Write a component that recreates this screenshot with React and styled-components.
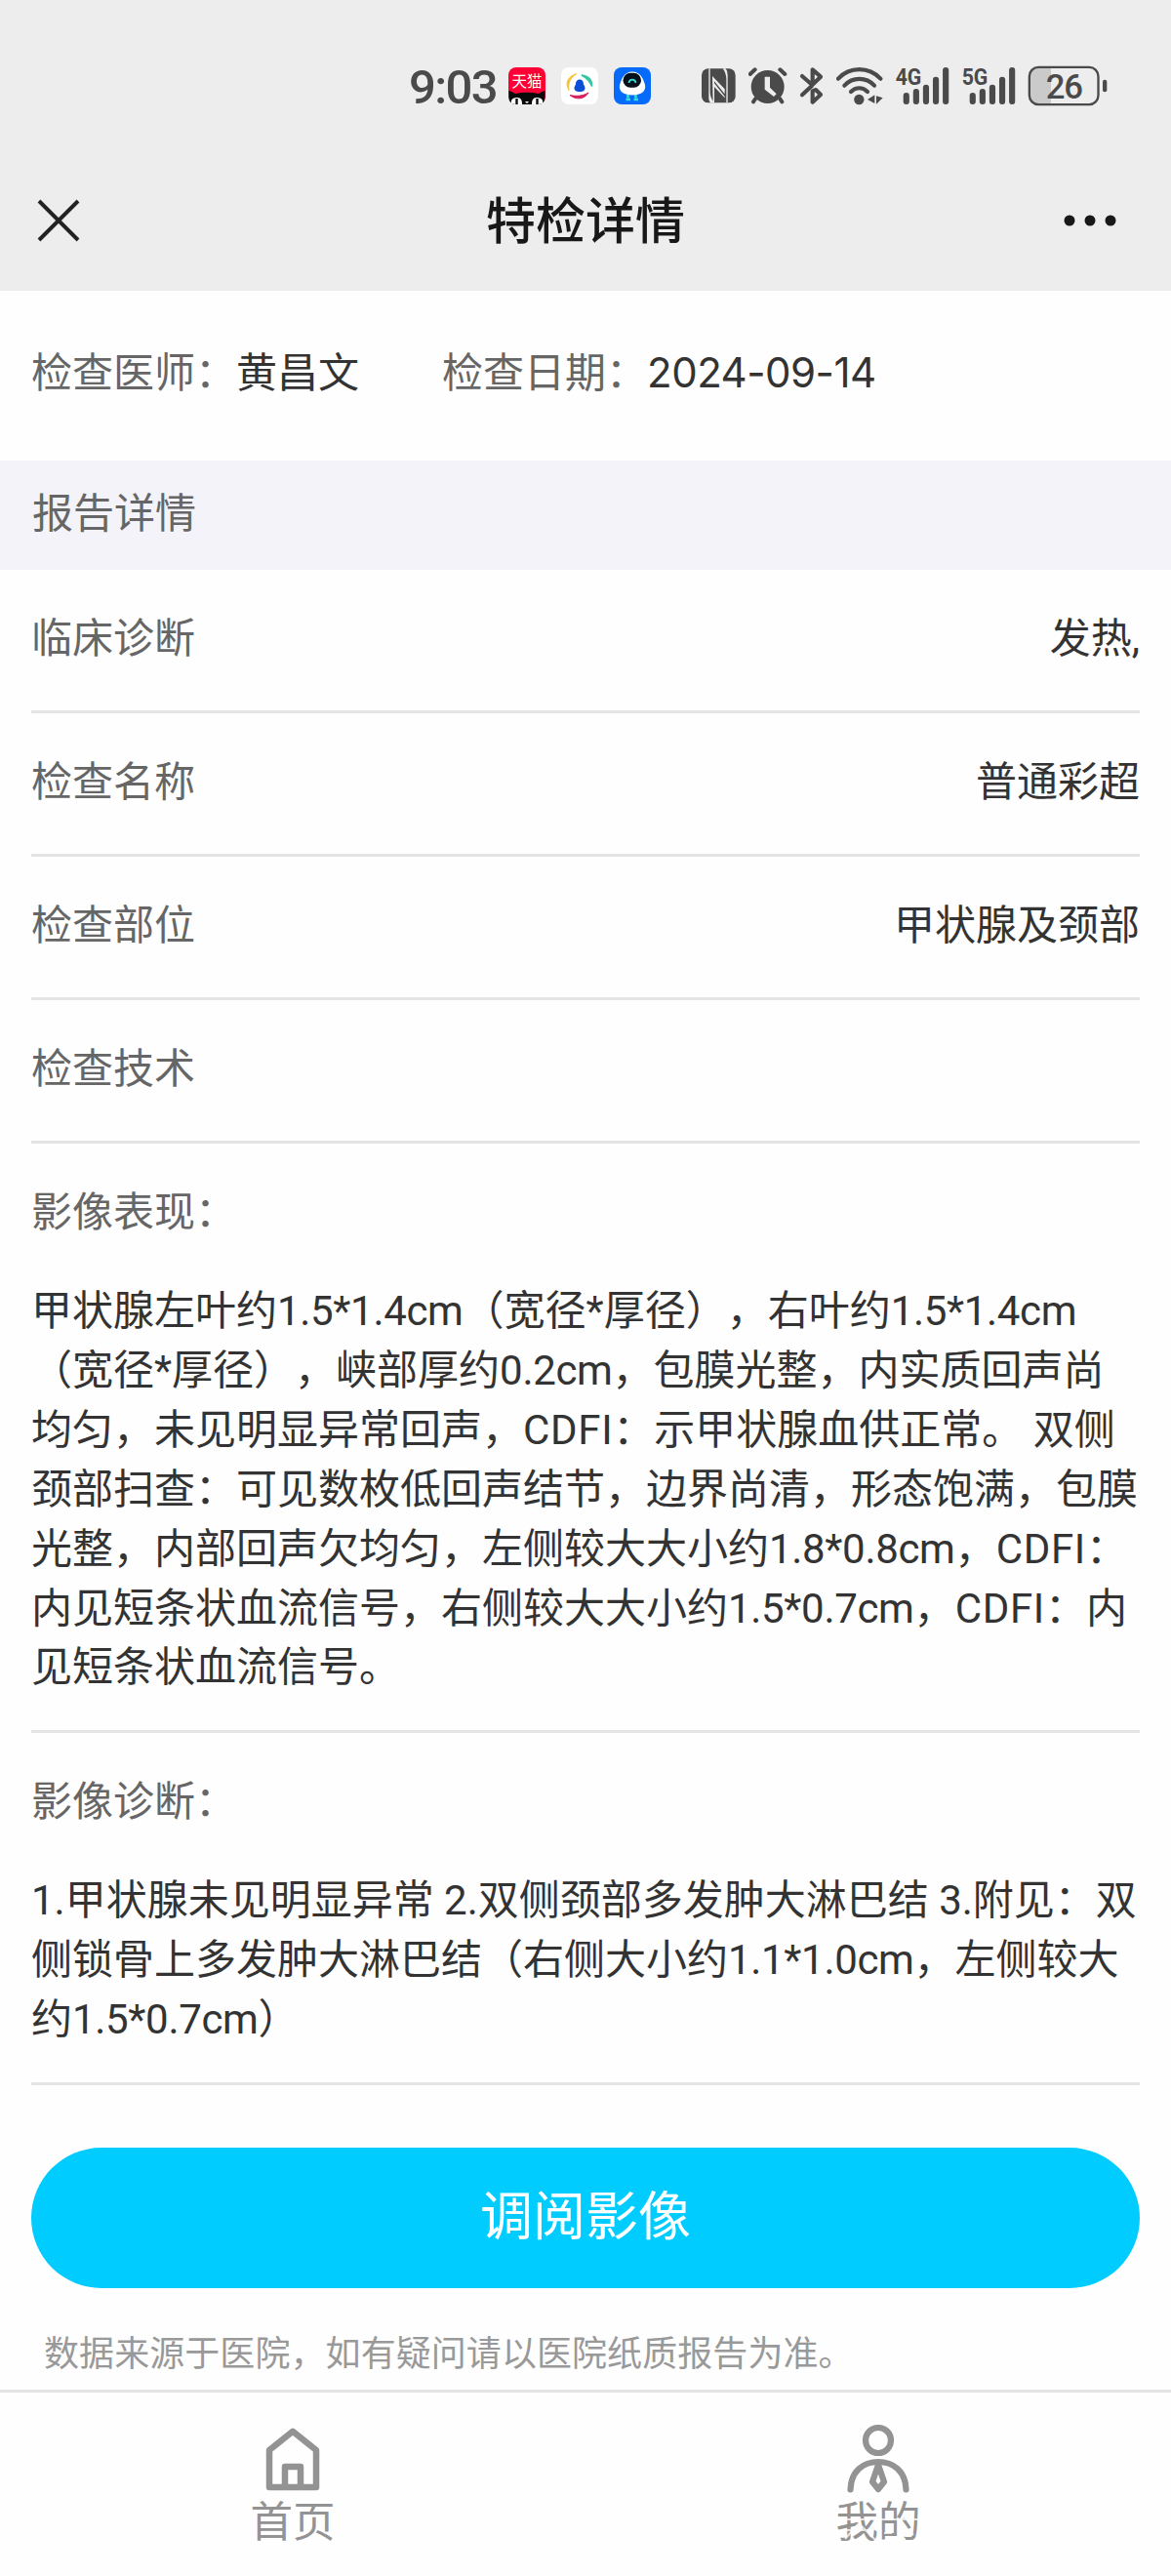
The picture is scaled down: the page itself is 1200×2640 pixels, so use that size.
import React from 'react';
import styled, { createGlobalStyle } from 'styled-components';

const GlobalStyle = createGlobalStyle`
  body {
    margin: 0;
    background: #fefefe;
    font-family: Roboto, 'Noto Sans CJK SC', sans-serif;
    font-size: 42px;
    color: #333;
    text-spacing-trim: space-all;
  }

  svg {
    display: block;
    flex: none;
  }
`;

const Page = styled.div`
  width: 1200px;
  height: 2640px;
  display: flex;
  flex-direction: column;
  overflow: hidden;
`;

const Header = styled.header`
  height: 298px;
  background: #ededed;
  flex: none;
`;

const StatusBar = styled.div`
  box-sizing: border-box;
  height: 154px;
  padding: 22px 0 0 419px;
  display: flex;
  align-items: center;
  color: #4a4a4a;
`;

const Time = styled.span`
  width: 102px;
  font-size: 49px;
  font-weight: 500;
  letter-spacing: -1.6px;
  line-height: 60px;
  padding-top: 3px;
`;

const AppIcons = styled.div`
  display: flex;
  gap: 16px;
  margin-right: 52px;
`;

const SystemIcons = styled.div`
  display: flex;
  align-items: center;
  gap: 12px;
`;

const NavBar = styled.nav`
  box-sizing: border-box;
  height: 144px;
  padding: 0 56px 0 38px;
  display: flex;
  align-items: center;
  justify-content: space-between;
`;

const Title = styled.h1`
  margin: 0;
  padding: 3px 0 0 28px;
  font-size: 51px;
  font-weight: 500;
  line-height: 60px;
  color: #181818;
`;

const InfoRow = styled.div`
  height: 174px;
  box-sizing: border-box;
  padding: 0 32px 13px;
  display: flex;
  align-items: center;
  gap: 85px;
  flex: none;
`;

const Label = styled.span`
  color: #666;
`;

const DateText = styled.span`
  font-family: Inter, sans-serif;
  letter-spacing: -0.5px;
`;

const SectionBar = styled.div`
  box-sizing: border-box;
  height: 112px;
  padding: 0 33px 11px;
  display: flex;
  align-items: center;
  background: #f4f3f9;
  color: #666;
  flex: none;
`;

const Details = styled.main`
  padding: 0 32px;
  flex: none;
`;

const DetailRow = styled.div`
  box-sizing: border-box;
  height: 147px;
  padding-bottom: 11px;
  display: flex;
  align-items: center;
  justify-content: space-between;
  border-bottom: 3px solid #e4e4e4;
`;

const TextBlock = styled.section`
  box-sizing: border-box;
  height: ${(props) => props.$height}px;
  padding-top: 40px;
  border-bottom: 3px solid #e4e4e4;
`;

const BlockTitle = styled.div`
  line-height: 61px;
  color: #666;
`;

const BlockText = styled.p`
  margin: 41px 0 0;
  line-height: 60.9px;
`;

const Latin = styled.span`
  letter-spacing: ${(props) => props.$spacing}px;
`;

const ViewButton = styled.button`
  display: block;
  width: 100%;
  height: 144px;
  margin-top: 64px;
  padding: 0 0 12px;
  border: none;
  border-radius: 72px;
  background: #0cf;
  color: #fff;
  font: inherit;
  font-size: 54px;
`;

const Notice = styled.p`
  margin: 40px 0 0;
  padding-left: 13px;
  font-size: 36px;
  letter-spacing: 0.07px;
  line-height: 56px;
  color: #999;
`;

const TabBar = styled.footer`
  margin-top: auto;
  box-sizing: border-box;
  height: 191px;
  display: flex;
  border-top: 3px solid #e4e4e4;
  flex: none;
`;

const Tab = styled.div`
  position: relative;
  flex: 1;
  display: flex;
  flex-direction: column;
  align-items: center;
  padding-top: 33px;
  font-size: 43.5px;
  line-height: 54px;
  color: #939393;
`;

const Overlay = styled.svg`
  position: absolute;
  left: 256px;
  top: 124px;
`;

const rows = [
  { label: '临床诊断', value: '发热,' },
  { label: '检查名称', value: '普通彩超' },
  { label: '检查部位', value: '甲状腺及颈部' },
  { label: '检查技术', value: '' },
];

const findings =
  '甲状腺左叶约1.5*1.4cm（宽径*厚径），右叶约1.5*1.4cm（宽径*厚径），峡部厚约0.2cm，包膜光整，内实质回声尚均匀，未见明显异常回声，CDFI：示甲状腺血供正常。 双侧颈部扫查：可见数枚低回声结节，边界尚清，形态饱满，包膜光整，内部回声欠均匀，左侧较大大小约1.8*0.8cm，CDFI：内见短条状血流信号，右侧较大大小约1.5*0.7cm，CDFI：内见短条状血流信号。';

const diagnosis =
  '1.甲状腺未见明显异常 2.双侧颈部多发肿大淋巴结 3.附见：双侧锁骨上多发肿大淋巴结（右侧大小约1.1*1.0cm，左侧较大约1.5*0.7cm）';

// Measurements are set a little tighter, abbreviations a little wider
const MixedText = ({ text }) =>
  text.split(/([\d.*]+cm|[A-Z]+)/).map((part, i) =>
    i % 2 === 0 ? (
      part
    ) : (
      <Latin key={i} $spacing={part.endsWith('cm') ? -0.32 : 0.7}>
        {part}
      </Latin>
    )
  );

const TmallIcon = () => (
  <svg width="38" height="38" viewBox="0 0 38 38">
    <rect width="38" height="38" rx="8" fill="#ff0036" />
    <text x="19" y="20" textAnchor="middle" fontSize="15.5" fill="#fff">
      天猫
    </text>
    <path
      d="M0.5 24 C3 24.5 5 25.5 7 27 Q19 24.5 31 27 C33 25.5 35 24.5 37.5 24 V30 Q37.5 38 30 38 H8 Q0.5 38 0.5 30 Z"
      fill="#0a0a0a"
    />
    <path d="M3 37 C2 33 5 31 9 31 C13 31 14 34 14 38 H7 Z" fill="#fff" />
    <path d="M35 37 C36 33 33 31 29 31 C25 31 24 34 24 38 H31 Z" fill="#fff" />
    <path d="M8.5 32 V38 M29.5 32 V38" stroke="#0a0a0a" strokeWidth="2.4" />
    <path d="M17 35 H21 L19 37 Z" fill="#fff" />
  </svg>
);

const GuardIcon = () => (
  <svg width="38" height="38" viewBox="0 0 38 38">
    <rect width="38" height="38" rx="8" fill="#fff" />
    <path d="M16 6.5 C7 9 3.5 16 8 23.5 C7 16 9 11 16 6.5 Z" fill="#f3c63a" stroke="#f3c63a" />
    <path
      d="M21 8 C28 8.5 32 13 31.5 19.5 C29.5 13.5 26.5 11 21 8 Z"
      fill="#35c6a0"
      stroke="#35c6a0"
      strokeWidth="1.6"
    />
    <path d="M9 28.5 C15 33.5 24 33 28 26 C22 29.5 16 30 9 28.5 Z" fill="#d81e5b" stroke="#d81e5b" />
    <path
      d="M19 12.5 C22 12.5 23 15 23 17.5 C24.5 19.5 25 22 24 23 C23.5 24.5 21.5 25 19 25 C16.5 25 14.5 24.5 14 23 C13 22 13.5 19.5 15 17.5 C15 15 16 12.5 19 12.5 Z"
      fill="#0b4fd8"
    />
  </svg>
);

const RobotIcon = () => (
  <svg width="38" height="38" viewBox="0 0 38 38">
    <rect width="38" height="38" rx="8" fill="#066bfb" />
    <path d="M14.5 28 V31.5 M22.5 28 V31.5 M12.5 33 H17 M20.5 33 H25" stroke="#2fe0d0" strokeWidth="2.6" />
    <path
      d="M19 4.5 C27 4.5 30 11 32 18 C33.5 25 27 28.5 19 28.5 C11 28.5 4.5 25 6 18 C8 11 11 4.5 19 4.5 Z"
      fill="#fff"
    />
    <rect x="9.5" y="5.8" width="18.5" height="15" rx="7.5" fill="#07111c" />
    <path d="M15.5 16 C16 11.5 22 11.5 22.5 16" fill="none" stroke="#2fe0d0" strokeWidth="1.7" />
  </svg>
);

const NfcIcon = () => (
  <svg width="36" height="42" viewBox="57 51 108 126">
    <rect x="57" y="61" width="104" height="105" rx="20" fill="#4a4a4a" />
    <g fill="#ededed">
      <path d="M79 61 H83 V134 Q84 152 96 166 H84 Q78 160 79 145 Z" />
      <path d="M90 84 L128 124 V139 L96 100 V166 H92 Z" />
      <path d="M96 106 L128 146 V151 L96 117 Z" />
      <path d="M122 61 H131 Q137 68 137 82 V166 H133 V92 Q132 74 122 61 Z" />
    </g>
  </svg>
);

const AlarmIcon = () => (
  <svg width="40" height="42" viewBox="201 51 120 126">
    <circle cx="260" cy="117" r="51" fill="#4a4a4a" />
    <path
      d="M206 78 L221 64 M313 78 L298 64 M222 154 L216 163 M298 154 L304 163"
      stroke="#4a4a4a"
      strokeWidth="12"
      strokeLinecap="round"
    />
    <path d="M251 86 H267 V119 L287 139 L279 147 L251 125 Z" fill="#ededed" />
  </svg>
);

const BluetoothIcon = () => (
  <svg width="26" height="42" viewBox="357 51 78 126">
    <path
      d="M366 84 L397 111 L423 86 L398 64 V106 M366 142 L395 115 M398 164 V130 L408 126 L423 141 Z"
      fill="none"
      stroke="#4a4a4a"
      strokeWidth="12.5"
      strokeLinecap="round"
      strokeLinejoin="round"
    />
  </svg>
);

const WifiIcon = () => (
  <svg width="48" height="42" viewBox="471 51 144 126">
    <g fill="none" stroke="#4a4a4a" strokeWidth="12.5" strokeLinecap="round">
      <path d="M477 92 C512 54 571 54 607 92" />
      <path d="M496 113 C521 86 563 86 588 113" />
      <path d="M516 132 C531 117 552 117 567 132" />
    </g>
    <circle cx="541" cy="156" r="15.5" fill="#4a4a4a" />
    <path d="M567 156 L589 142 V168 Z M594 145 V170 L614 151 Z" fill="#4a4a4a" />
  </svg>
);

const SignalIcon = ({ type }) => (
  <svg width="56" height="54" viewBox="651 33 168 162">
    <text
      x="653"
      y="112"
      fontFamily="Roboto"
      fontSize="73"
      fontWeight="700"
      textLength="80"
      lengthAdjust="spacingAndGlyphs"
      fill="#4a4a4a"
    >
      {type}
    </text>
    {[135, 123, 110, 86, 57].map((top, i) => (
      <rect
        key={top}
        x={677 + i * 30.3}
        y={top}
        width="18.5"
        height={171 - top}
        rx="9"
        fill="#4a4a4a"
      />
    ))}
  </svg>
);

const BatteryIcon = () => (
  <svg width="82" height="42" viewBox="1059 51 246 126">
    <path d="M1131 58 V170 H1092 Q1066 170 1066 144 V84 Q1066 58 1092 58 Z" fill="#cacaca" />
    <rect
      x="1064.5"
      y="56.5"
      width="212"
      height="115"
      rx="28"
      fill="none"
      stroke="#4a4a4a"
      strokeWidth="7"
    />
    <rect x="1290" y="95" width="13" height="38" rx="6" fill="#4a4a4a" />
    <text
      x="1171"
      y="152"
      textAnchor="middle"
      fontFamily="Roboto"
      fontSize="104"
      fontWeight="500"
      letterSpacing="-3"
      fill="#4a4a4a"
    >
      26
    </text>
  </svg>
);

const CloseIcon = () => (
  <svg width="44" height="44" viewBox="0 0 44 44">
    <path d="M2 2 L42 42 M42 2 L2 42" stroke="#222" strokeWidth="3.9" />
  </svg>
);

const MoreIcon = () => (
  <svg width="54" height="12" viewBox="0 0 54 12">
    <circle cx="6" cy="6" r="5.5" fill="#181818" />
    <circle cx="27" cy="6" r="5.5" fill="#181818" />
    <circle cx="48" cy="6" r="5.5" fill="#181818" />
  </svg>
);

const HomeIcon = () => (
  <svg width="60" height="74" viewBox="-3 -3 60 74">
    <path
      d="M27 3.8 L51 23 V61 H3 V23 Z M19 61 V40 H35 V61"
      fill="none"
      stroke="#939393"
      strokeWidth="6.5"
      strokeLinejoin="round"
    />
  </svg>
);

const MineIcon = () => (
  <svg width="66" height="74" viewBox="0 0 66 74">
    <g fill="none" stroke="#939393" strokeWidth="6.2" strokeLinecap="round" strokeLinejoin="round">
      <circle cx="33" cy="16" r="13" />
      <path d="M4.5 66.5 C5 47 18 38 33 38 C48 38 61 47 61.5 66.5" />
      <path d="M33 41 L27 58.5 L33 66 L39 58.5 Z" />
    </g>
  </svg>
);

const App = () => {
  return (
    <Page>
      <GlobalStyle />
      <Header>
        <StatusBar>
          <Time>9:03</Time>
          <AppIcons>
            <TmallIcon />
            <GuardIcon />
            <RobotIcon />
          </AppIcons>
          <SystemIcons>
            <NfcIcon />
            <AlarmIcon />
            <BluetoothIcon />
            <WifiIcon />
            <SignalIcon type="4G" />
            <SignalIcon type="5G" />
            <BatteryIcon />
          </SystemIcons>
        </StatusBar>
        <NavBar>
          <CloseIcon />
          <Title>特检详情</Title>
          <MoreIcon />
        </NavBar>
      </Header>
      <InfoRow>
        <span>
          <Label>检查医师：</Label>黄昌文
        </span>
        <span>
          <Label>检查日期：</Label>
          <DateText>2024-09-14</DateText>
        </span>
      </InfoRow>
      <SectionBar>报告详情</SectionBar>
      <Details>
        {rows.map((row) => (
          <DetailRow key={row.label}>
            <Label>{row.label}</Label>
            <span>{row.value}</span>
          </DetailRow>
        ))}
        <TextBlock $height={604}>
          <BlockTitle>影像表现：</BlockTitle>
          <BlockText>
            <MixedText text={findings} />
          </BlockText>
        </TextBlock>
        <TextBlock $height={361}>
          <BlockTitle>影像诊断：</BlockTitle>
          <BlockText>
            <MixedText text={diagnosis} />
          </BlockText>
        </TextBlock>
        <ViewButton>调阅影像</ViewButton>
        <Notice>数据来源于医院，如有疑问请以医院纸质报告为准。</Notice>
      </Details>
      <TabBar>
        <Tab>
          <HomeIcon />
          首页
        </Tab>
        <Tab>
          <MineIcon />
          我的
          <Overlay width="88" height="30" viewBox="0 0 88 30">
            <path
              d="M0 6 H88 M6 17 H36 M24 10 L10 26 M26 12 L42 28 M50 20 H58 M60 26 H72 M70 12 L80 22"
              fill="none"
              stroke="#fefefe"
              strokeWidth="2"
              opacity="0.75"
            />
          </Overlay>
        </Tab>
      </TabBar>
    </Page>
  );
};

export default App;
